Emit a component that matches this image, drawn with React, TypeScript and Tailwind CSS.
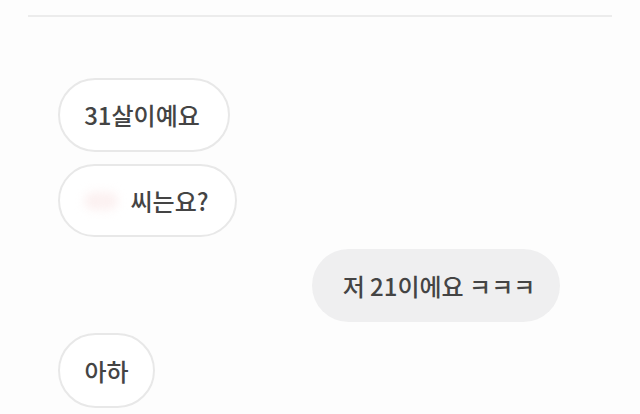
import React from "react";

export default function App() {
  const font = { fontFamily: '"Noto Sans CJK KR", "Noto Sans", sans-serif' };
  return (
    <div className="w-[640px] h-[414px] bg-[#fdfdfd] overflow-hidden flex flex-col text-[#444444]" style={font}>
      <div className="pt-[15px] px-[28px]">
        <div className="h-[2px] bg-[#ececec]" />
      </div>
      <div className="flex flex-col pt-[61px] pl-[58px] pr-[80px] gap-[12px]">
        <div className="w-[172px] h-[74px] rounded-full border-2 border-[#e8e8e8] bg-white flex items-center justify-center text-[24px] font-medium leading-none pr-[4px]">
          31살이예요
        </div>
        <div className="w-[179px] h-[73px] rounded-full border-2 border-[#e8e8e8] bg-white flex items-center justify-center text-[24px] font-medium leading-none pr-[2px] gap-[12px]">
          <span className="w-[34px] h-[18px] rounded-full bg-[#fcf1f1] blur-[5px]" />
          <span>씨는요?</span>
        </div>
        <div className="self-end w-[248px] h-[73px] rounded-full bg-[#efeff0] flex items-center justify-center text-[24px] font-medium leading-none pl-[6px]">
          저 21이에요 ㅋㅋㅋ
        </div>
        <div className="w-[97px] h-[75px] -mt-px rounded-full border-2 border-[#e8e8e8] bg-white flex items-center justify-center text-[24px] font-medium leading-none">
          아하
        </div>
      </div>
    </div>
  );
}
